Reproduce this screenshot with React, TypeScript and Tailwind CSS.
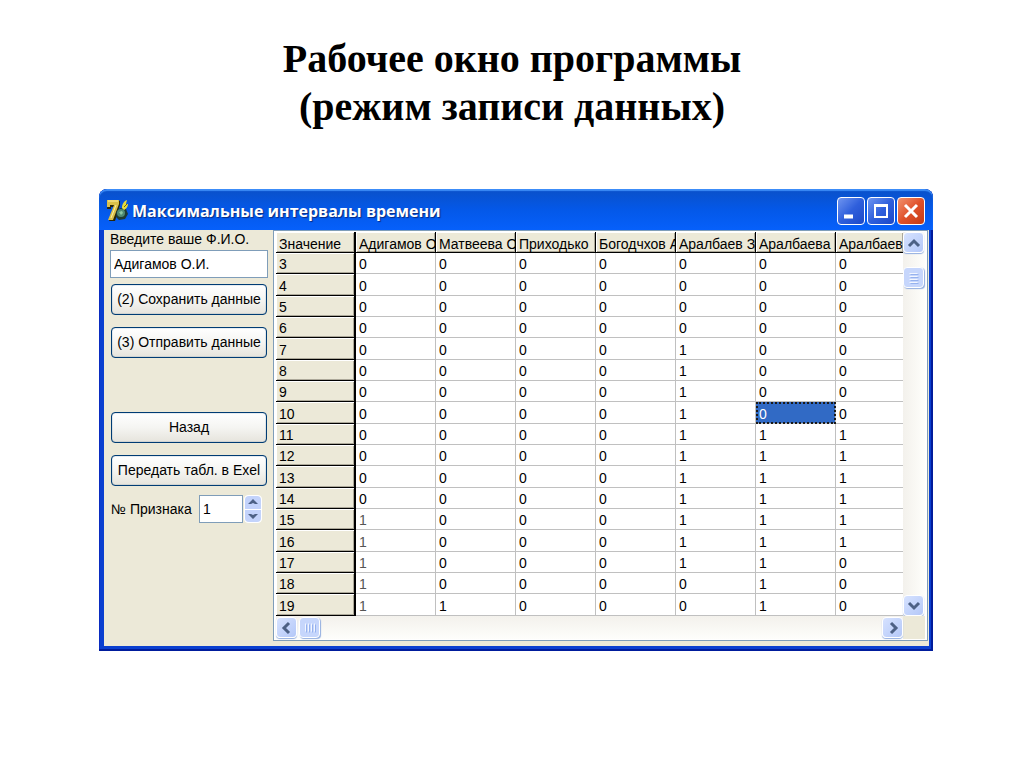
import { useState } from "react";
import type { ReactNode } from "react";

const COLUMNS = [
  "Адигамов О",
  "Матвеева О",
  "Приходько",
  "Богодчхов А",
  "Аралбаев З",
  "Аралбаева",
  "Аралбаев",
];

const ROWS = [
  { id: 3, values: [0, 0, 0, 0, 0, 0, 0] },
  { id: 4, values: [0, 0, 0, 0, 0, 0, 0] },
  { id: 5, values: [0, 0, 0, 0, 0, 0, 0] },
  { id: 6, values: [0, 0, 0, 0, 0, 0, 0] },
  { id: 7, values: [0, 0, 0, 0, 1, 0, 0] },
  { id: 8, values: [0, 0, 0, 0, 1, 0, 0] },
  { id: 9, values: [0, 0, 0, 0, 1, 0, 0] },
  { id: 10, values: [0, 0, 0, 0, 1, 0, 0] },
  { id: 11, values: [0, 0, 0, 0, 1, 1, 1] },
  { id: 12, values: [0, 0, 0, 0, 1, 1, 1] },
  { id: 13, values: [0, 0, 0, 0, 1, 1, 1] },
  { id: 14, values: [0, 0, 0, 0, 1, 1, 1] },
  { id: 15, values: [1, 0, 0, 0, 1, 1, 1] },
  { id: 16, values: [1, 0, 0, 0, 1, 1, 1] },
  { id: 17, values: [1, 0, 0, 0, 1, 1, 0] },
  { id: 18, values: [1, 0, 0, 0, 0, 1, 0] },
  { id: 19, values: [1, 1, 0, 0, 0, 1, 0] },
];

function AppIcon() {
  return (
    <svg viewBox="0 0 24 24" className="h-6 w-6 shrink-0" aria-hidden="true">
      <path d="M2 2h12v4L9 22H3l5-14H5v2H1z" fill="#2a2608" />
      <path d="M1 1h12v4L7 21H2L8 6H4v2H1z" fill="#d9c04a" />
      <path d="M2 2h10M10 6L5 19" stroke="#fff2a0" strokeWidth="1" />
      <path d="M10 13l4-4 6 1 2 5-3 5-6 1-3-3z" fill="#1d3a34" />
      <circle cx="15" cy="14" r="4" fill="#4f8a74" />
      <path d="M13 13l3-1 1 2-2 2z" fill="#8cc7a4" />
      <path d="M16 9c0-4 2-7 5-8l-1 4h2c0 3-2 5-4 6z" fill="#e6dc3c" />
      <path d="M18 8l3-3" stroke="#6b6410" strokeWidth="1" />
    </svg>
  );
}

function CaptionButton({ label, close, children }: { label: string; close?: boolean; children: ReactNode }) {
  return (
    <button
      aria-label={label}
      className={`flex size-7 items-center justify-center rounded border border-white bg-linear-to-br ${
        close ? "from-[#f0906c] via-[#e0512a] to-[#c43a14]" : "from-[#6f94f0] via-[#2f5fdc] to-[#1c48c8]"
      }`}
    >
      <svg viewBox="0 0 26 26" className="size-[26px]" fill="none" stroke="#fff">
        {children}
      </svg>
    </button>
  );
}

function XpButton({ children }: { children: ReactNode }) {
  return (
    <button className="h-[31px] w-full rounded border border-[#003c74] bg-linear-to-b from-white via-[#f5f5f2] to-[#e6e4dc] whitespace-nowrap shadow-[inset_0_0_1px_#003c74]">
      {children}
    </button>
  );
}

function ScrollButton({ label, d }: { label: string; d: string }) {
  return (
    <button
      aria-label={label}
      className="flex size-[21px] shrink-0 items-center justify-center rounded-sm border border-white bg-linear-to-br from-[#d6e2ff] to-[#b4c8f8] shadow-[0_1px_1px_#93aee0]"
    >
      <svg viewBox="0 0 16 16" className="size-4" fill="none" stroke="#4d6185" strokeWidth="3">
        <path d={d} />
      </svg>
    </button>
  );
}

function ScrollThumb({ d }: { d: string }) {
  return (
    <div className="flex size-[21px] shrink-0 items-center justify-center rounded-sm border border-white bg-[#c6d6fc] shadow-[1px_1px_1px_#93aee0]">
      <svg viewBox="0 0 16 16" className="size-4" fill="none">
        <path d={d} stroke="#f2f6ff" strokeWidth="1" transform="translate(-.5 -.5)" />
        <path d={d} stroke="#96b2ee" strokeWidth="1" transform="translate(.5 .5)" />
      </svg>
    </div>
  );
}

function TitleBar() {
  return (
    <div className="flex h-[41px] items-center rounded-t-lg bg-linear-to-b from-[#0a50c8] via-[#0458e8] to-[#0660fb] pt-[3px] pr-2 pl-[7px] shadow-[inset_0_2px_1px_#3c8cf8]">
      <AppIcon />
      <h2 className="ml-[2px] flex-1 truncate font-['Open_Sans',sans-serif] text-[16px] leading-6 font-bold text-white [text-shadow:1px_1px_1px_#0a2a80]">
        Максимальные интервалы времени
      </h2>
      <div className="flex gap-[2px]">
        <CaptionButton label="Свернуть">
          <path d="M6 18.5h9" strokeWidth="4" />
        </CaptionButton>
        <CaptionButton label="Развернуть">
          <path d="M6 7.5h14" strokeWidth="3" />
          <path d="M7 7v12h12V7" strokeWidth="2" />
        </CaptionButton>
        <CaptionButton label="Закрыть" close>
          <path d="M7 7l12 12M19 7L7 19" strokeWidth="3" />
        </CaptionButton>
      </div>
    </div>
  );
}

function Sidebar() {
  const [name, setName] = useState("Адигамов О.И.");
  const [sign, setSign] = useState(1);

  return (
    <div className="flex w-[169px] shrink-0 flex-col pr-[5px] pl-[6px]">
      <label htmlFor="fio" className="leading-[18px] whitespace-nowrap">
        Введите ваше Ф.И.О.
      </label>
      <input
        id="fio"
        value={name}
        onChange={(e) => setName(e.target.value)}
        className="mt-[2px] h-7 w-full border border-[#7f9db9] bg-white px-[3px]"
      />
      <div className="mt-[6px] flex flex-col gap-3 pr-px pl-px">
        <XpButton>(2) Сохранить данные</XpButton>
        <XpButton>(3) Отправить данные</XpButton>
      </div>
      <div className="mt-[54px] flex flex-col gap-3 pr-px pl-px">
        <XpButton>Назад</XpButton>
        <XpButton>Передать табл. в Exel</XpButton>
      </div>
      <div className="mt-[9px] flex items-center pl-px">
        <label htmlFor="sign" className="w-[88px] whitespace-nowrap">
          № Признака
        </label>
        <input
          id="sign"
          value={sign}
          onChange={(e) => setSign(Number(e.target.value) || 0)}
          className="h-7 w-11 border border-[#7f9db9] bg-white px-[3px]"
        />
        <div className="ml-px flex h-7 w-[18px] flex-col gap-px rounded-sm border border-white bg-white">
          <button
            aria-label="Больше"
            onClick={() => setSign(sign + 1)}
            className="flex flex-1 items-center justify-center rounded-t-sm bg-[#c3d3fb]"
          >
            <svg viewBox="0 0 10 6" className="h-[6px] w-[10px]" fill="#4d6185">
              <path d="M5 0l5 5H7L5 4 3 5H0z" />
            </svg>
          </button>
          <button
            aria-label="Меньше"
            onClick={() => setSign(sign - 1)}
            className="flex flex-1 items-center justify-center rounded-b-sm bg-[#c3d3fb]"
          >
            <svg viewBox="0 0 10 6" className="h-[6px] w-[10px]" fill="#4d6185">
              <path d="M5 6L0 1h3l2 1 2-1h3z" />
            </svg>
          </button>
        </div>
      </div>
    </div>
  );
}

const HEAD_CELL =
  "overflow-hidden border-b border-black bg-[#ece9d8] p-0 pl-[3px] text-left font-normal whitespace-nowrap shadow-[inset_1px_1px_0_#fff,inset_-1px_-1px_0_#aca899]";

function DataGrid() {
  return (
    <div className="flex min-w-0 flex-1 flex-col border border-[#7f9db9] bg-white pt-px pr-[2px] pb-px pl-[2px]">
      <div className="flex">
        <div className="min-w-0 flex-1 overflow-hidden">
          <table className="w-full table-fixed border-separate border-spacing-0">
            <colgroup>
              <col className="w-20" />
              {COLUMNS.map((name, i) => (
                <col key={name} className={i < COLUMNS.length - 1 ? "w-20" : ""} />
              ))}
            </colgroup>
            <thead>
              <tr className="h-[21px]">
                <th scope="col" className={`${HEAD_CELL} border-r-2`}>
                  <div className="h-[19px] overflow-hidden leading-[23px]">Значение</div>
                </th>
                {COLUMNS.map((name) => (
                  <th key={name} scope="col" className={`${HEAD_CELL} border-r last:border-r-0`}>
                    <div className="h-[19px] overflow-hidden leading-[23px]">{name}</div>
                  </th>
                ))}
              </tr>
            </thead>
            <tbody>
              {ROWS.map((row, r) => (
                <tr key={row.id} className={r % 3 === 1 ? "h-[22px]" : "h-[21px]"}>
                  <th scope="row" className={`${HEAD_CELL} border-r-2 pt-[2px] leading-[18px]`}>
                    {row.id}
                  </th>
                  {row.values.map((value, c) => {
                    const selected = row.id === 10 && c === 5;
                    return (
                      <td
                        key={c}
                        className={`border-r border-b border-[#c0c0c0] p-0 pt-[2px] pl-[3px] leading-[18px] last:border-r-0 ${
                          selected
                            ? "bg-[#316ac5] text-white outline-2 -outline-offset-2 outline-dotted outline-[#1a1a1a]"
                            : c === 0 && value === 1
                              ? "text-[#555]"
                              : ""
                        }`}
                      >
                        {value}
                      </td>
                    );
                  })}
                </tr>
              ))}
            </tbody>
          </table>
        </div>
        <div className="flex w-[22px] flex-col bg-linear-to-r from-[#f3f1ec] to-[#fefefb]">
          <ScrollButton label="Вверх" d="M3 11l5-5 5 5" />
          <div className="mt-[14px] flex-1">
            <ScrollThumb d="M4 4h8M4 7h8M4 10h8M4 13h8" />
          </div>
          <ScrollButton label="Вниз" d="M3 5l5 5 5-5" />
        </div>
      </div>
      <div className="flex h-[23px] bg-[#ece9d8]">
        <div className="flex flex-1 items-center gap-[2px] bg-linear-to-b from-[#f3f1ec] to-[#fefefb]">
          <ScrollButton label="Влево" d="M10 3L5 8l5 5" />
          <div className="flex-1">
            <ScrollThumb d="M4 4v8M7 4v8M10 4v8M13 4v8" />
          </div>
          <ScrollButton label="Вправо" d="M6 3l5 5-5 5" />
        </div>
        <div className="w-[22px]" />
      </div>
    </div>
  );
}

export default function App() {
  return (
    <main className="min-h-screen bg-white pt-[35px] pb-10 text-black">
      <h1 className="text-center font-['Liberation_Serif',serif] text-[40px] leading-[48px] font-bold">
        <span className="block">Рабочее окно программы</span>
        <span className="block">(режим записи данных)</span>
      </h1>
      <section className="mt-[58px] mr-[91px] ml-[99px] overflow-hidden rounded-t-lg bg-[#0a3fd0] font-['Liberation_Sans',sans-serif] text-[14px] shadow-[inset_-2px_-2px_0_#001c9c,inset_1px_0_0_#0a2cc0]">
        <TitleBar />
        <div className="mr-[4px] mb-[5px] ml-[5px] flex bg-[#ece9d8] pr-px pb-[5px]">
          <Sidebar />
          <DataGrid />
        </div>
      </section>
    </main>
  );
}
